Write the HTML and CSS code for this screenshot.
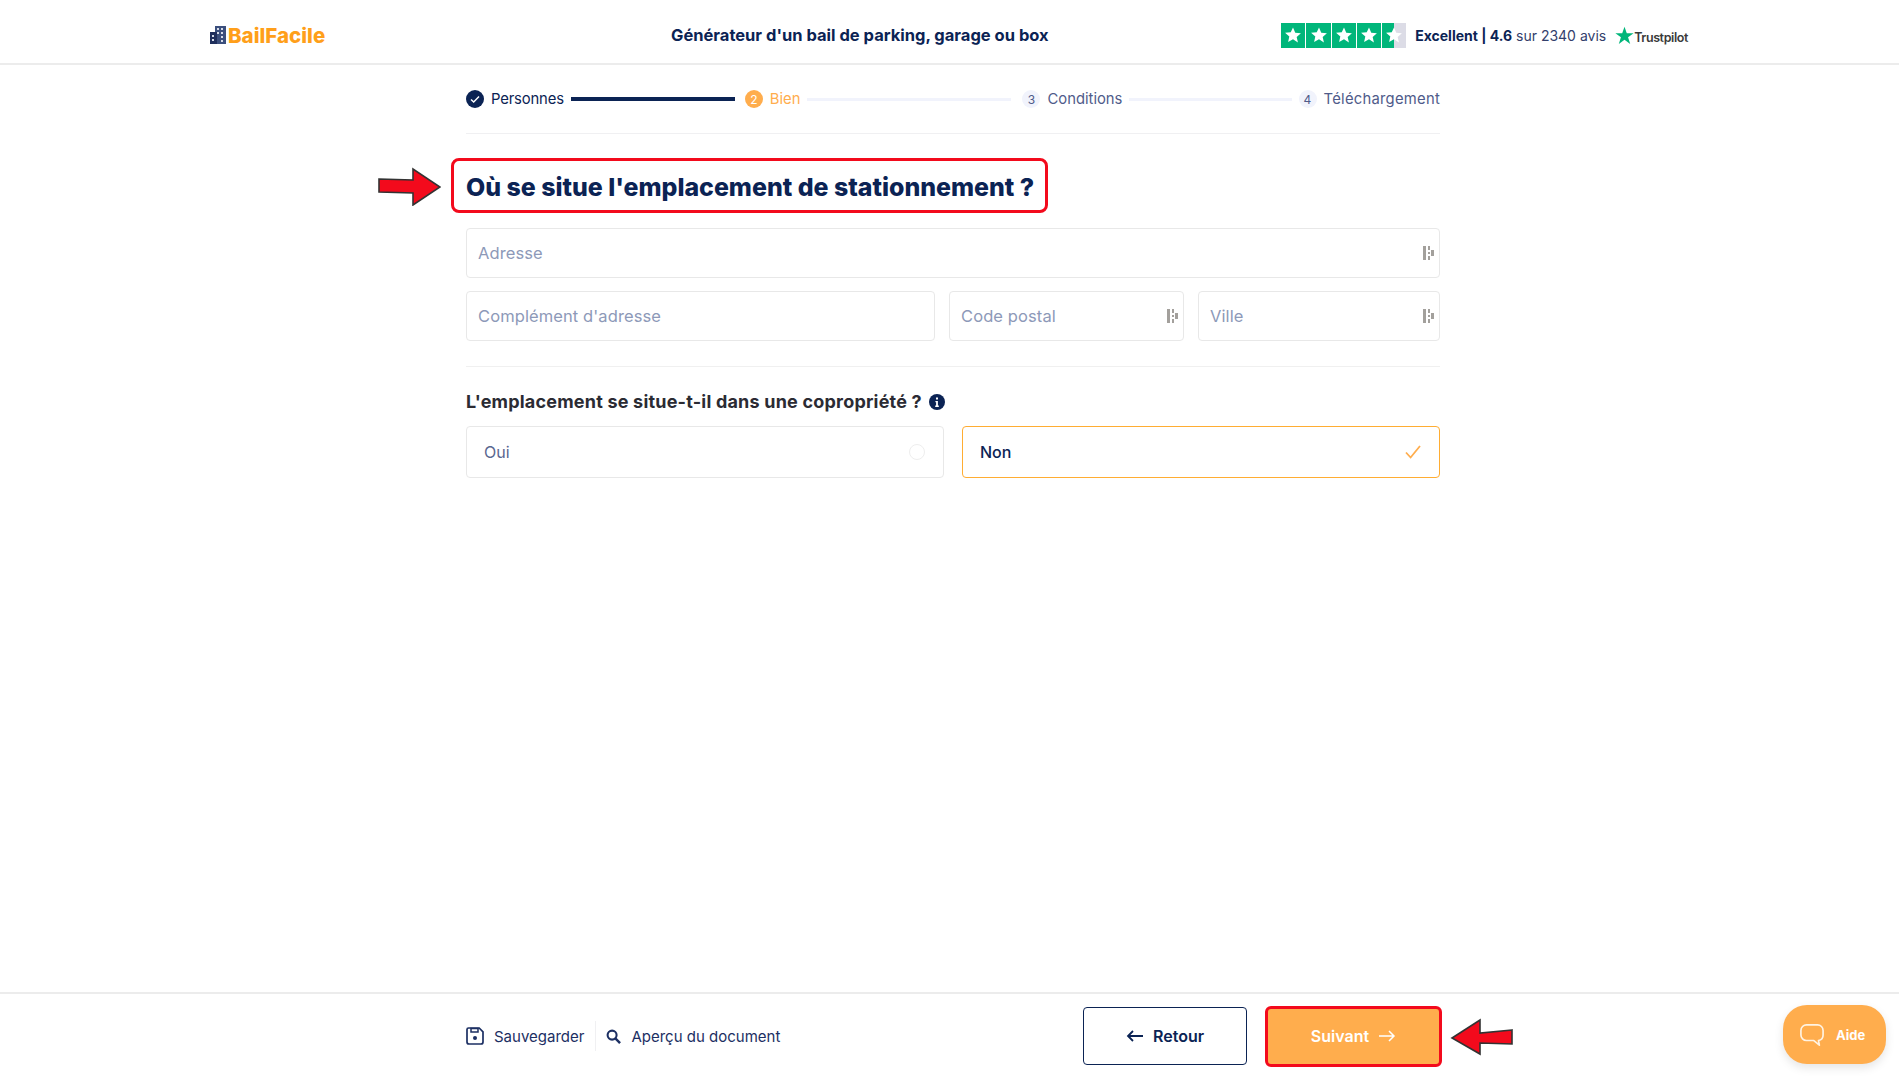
FILE: index.html
```html
<!DOCTYPE html>
<html lang="fr">
<head>
  <meta charset="UTF-8">
  <meta name="viewport" content="width=device-width, initial-scale=1.0">
  <title>BailFacile</title>
  <link rel="stylesheet" href="styles.css">
</head>
<body>
  <header class="topbar">
    <a class="logo">
      <svg class="logo-icon" viewBox="0 0 16 18">
        <rect x="5" y="0" width="11" height="18" fill="#3b4f7d"/>
        <rect x="0" y="6" width="7" height="12" fill="#1f2f5c"/>
        <path d="M7 2h2v2H7zM11 2h2v2h-2zM7 6h2v2H7zM11 6h2v2h-2zM11 10h2v2h-2zM11 14h2v2h-2zM2 9h2v2H2zM2 13h2v2H2z" fill="#d5dbe8"/>
      </svg>
      <span>BailFacile</span>
    </a>
    <div class="topbar-title">Générateur d'un bail de parking, garage ou box</div>
    <div class="trust">
      <div class="trust-stars">
        <span class="star-box"><svg viewBox="0 0 24 24"><path d="M12 3l2.7 6.2 6.8.6-5.1 4.5 1.5 6.7L12 17l-5.9 3.5 1.5-6.7-5.1-4.5 6.8-.6z"/></svg></span>
        <span class="star-box"><svg viewBox="0 0 24 24"><path d="M12 3l2.7 6.2 6.8.6-5.1 4.5 1.5 6.7L12 17l-5.9 3.5 1.5-6.7-5.1-4.5 6.8-.6z"/></svg></span>
        <span class="star-box"><svg viewBox="0 0 24 24"><path d="M12 3l2.7 6.2 6.8.6-5.1 4.5 1.5 6.7L12 17l-5.9 3.5 1.5-6.7-5.1-4.5 6.8-.6z"/></svg></span>
        <span class="star-box"><svg viewBox="0 0 24 24"><path d="M12 3l2.7 6.2 6.8.6-5.1 4.5 1.5 6.7L12 17l-5.9 3.5 1.5-6.7-5.1-4.5 6.8-.6z"/></svg></span>
        <span class="star-box star-half"><svg viewBox="0 0 24 24"><path d="M12 3l2.7 6.2 6.8.6-5.1 4.5 1.5 6.7L12 17l-5.9 3.5 1.5-6.7-5.1-4.5 6.8-.6z"/></svg></span>
      </div>
      <div class="trust-text"><b>Excellent | 4.6</b> sur 2340 avis</div>
      <div class="trustpilot">
        <svg viewBox="0 0 24 24" width="19" height="19"><path fill="#00b67a" d="M12 1l2.9 8.2h8.6l-7 5.1 2.7 8.4-7.2-5.2-7.2 5.2 2.7-8.4-7-5.1h8.6z"/></svg>
        <span>Trustpilot</span>
      </div>
    </div>
  </header>

  <main class="content">
    <nav class="steps">
      <span class="step step-done">
        <svg class="step-icon" viewBox="0 0 18 18"><circle cx="9" cy="9" r="9" fill="#0b2354"/><path d="M5 9.4l2.7 2.7L13 6.4" fill="none" stroke="#fff" stroke-width="1.4"/></svg>
        Personnes
      </span>
      <span class="step-line step-line-done"></span>
      <span class="step step-current"><span class="step-num">2</span>Bien</span>
      <span class="step-line step-line-mid"></span>
      <span class="step step-third"><span class="step-num">3</span>Conditions</span>
      <span class="step-line step-line-last"></span>
      <span class="step step-last"><span class="step-num">4</span>Téléchargement</span>
    </nav>

    <div class="heading-row">
      <svg class="mark mark-title" viewBox="0 0 63 39"><path d="M1 12l34 1V2l27 18-27 18V26L1 25z" fill="#f30a1c" stroke="#333" stroke-width="1.6"/></svg>
      <h1 class="heading">Où se situe l'emplacement de stationnement ?</h1>
    </div>

    <div class="field-row">
      <div class="field field-full">
        <span class="placeholder">Adresse</span>
        <svg class="field-icon" viewBox="0 0 11 14"><path d="M0 0h3v14H0zM5 0h2v4H5zM5 6h2v2H5zM5 10h2v4H5zM8 4h3v6H8z" fill="#a3a09c"/></svg>
      </div>
    </div>
    <div class="field-row">
      <div class="field field-wide"><span class="placeholder">Complément d'adresse</span></div>
      <div class="field field-postal">
        <span class="placeholder">Code postal</span>
        <svg class="field-icon" viewBox="0 0 11 14"><path d="M0 0h3v14H0zM5 0h2v4H5zM5 6h2v2H5zM5 10h2v4H5zM8 4h3v6H8z" fill="#a3a09c"/></svg>
      </div>
      <div class="field field-city">
        <span class="placeholder">Ville</span>
        <svg class="field-icon" viewBox="0 0 11 14"><path d="M0 0h3v14H0zM5 0h2v4H5zM5 6h2v2H5zM5 10h2v4H5zM8 4h3v6H8z" fill="#a3a09c"/></svg>
      </div>
    </div>

    <hr class="divider">

    <div class="question">
      L'emplacement se situe-t-il dans une copropriété ?
      <svg viewBox="0 0 16 16" width="16" height="16"><circle cx="8" cy="8" r="8" fill="#0b2354"/><path d="M7 3.4h2v2H7zM6.4 7h2.5v4.6h.9V13H6.2v-1.4h.9V8.3h-.7z" fill="#fff"/></svg>
    </div>

    <div class="choices">
      <div class="choice">
        Oui
        <span class="choice-radio"></span>
      </div>
      <div class="choice choice-on">
        Non
        <svg viewBox="0 0 16 14" width="16" height="14"><path d="M1 7.5l4.6 5L15 1" fill="none" stroke="#ffad4d" stroke-width="1.8"/></svg>
      </div>
    </div>
  </main>

  <footer class="bottombar">
    <div class="links">
      <a class="link">
        <svg viewBox="0 0 18 18" width="18" height="18"><path d="M2.5 1h10.7L17 4.8V15a2 2 0 0 1-2 2H3a2 2 0 0 1-2-2V2.500A1.500 1.500 0 0 1 2.500 1z" fill="none" stroke="#1c2f63" stroke-width="1.700"/><path d="M5 1.500h7v3.500H5z" fill="none" stroke="#1c2f63" stroke-width="1.500"/><circle cx="9" cy="11" r="2" fill="#1c2f63"/></svg>
        Sauvegarder
      </a>
      <a class="link link-sep">
        <svg viewBox="0 0 16 16" width="15" height="15"><circle cx="6.500" cy="6.500" r="4.800" fill="none" stroke="#1c2f63" stroke-width="2.200"/><path d="M10 10l5 5" stroke="#1c2f63" stroke-width="2.600"/></svg>
        Aperçu du document
      </a>
    </div>
    <div class="actions">
      <button class="btn btn-back">
        <svg viewBox="0 0 18 12" width="18" height="12"><path d="M17 6H2M7 1L2 6l5 5" fill="none" stroke="#0b2354" stroke-width="1.800"/></svg>
        Retour
      </button>
      <div class="next-wrap">
        <button class="btn btn-next">
          Suivant
          <svg viewBox="0 0 18 12" width="18" height="12"><path d="M1 6h15M11 1l5 5-5 5" fill="none" stroke="#fff" stroke-width="1.500"/></svg>
        </button>
        <svg class="mark mark-next" viewBox="0 0 63 39"><path d="M62 13l-32 3V3L2 21l28 16V26l32 1z" fill="#f30a1c" stroke="#333" stroke-width="1.600"/></svg>
      </div>
    </div>
  </footer>

  <button class="help">
    <svg viewBox="0 0 28 26" width="26" height="24"><path d="M8 2h12a6 6 0 0 1 6 6v5a6 6 0 0 1-5 6l1 5-6-5H8a6 6 0 0 1-6-6V8a6 6 0 0 1 6-6z" fill="none" stroke="#fff3e3" stroke-width="1.800" stroke-linejoin="round"/></svg>
    Aide
  </button>
</body>
</html>
```

FILE: styles.css
```css
* {
  box-sizing: border-box;
}
body {
  margin: 0;
  height: 100vh;
  display: flex;
  flex-direction: column;
  font-family: Inter, "Noto Sans", sans-serif;
  color: #0b2354;
  background: #fff;
  overflow: hidden;
}

/* top bar */
.topbar {
  height: 65px;
  flex: none;
  display: flex;
  align-items: center;
  padding: 7px 211px 0 210px;
  border-bottom: 2px solid #ececec;
}
.logo {
  display: flex;
  align-items: center;
  gap: 2px;
  width: 116px;
  font-size: 20.500px;
  font-weight: 800;
  color: #ff9f1a;
}
.logo-icon {
  flex: none;
  width: 16px;
  height: 18px;
}
.topbar-title {
  margin-left: 345px;
  font-size: 16.500px;
  font-weight: 700;
  white-space: nowrap;
}
.trust {
  margin-left: auto;
  display: flex;
  align-items: center;
}
.trust-stars {
  display: flex;
  gap: 1px;
}
.star-box {
  width: 24.200px;
  height: 25px;
  background: #00b67a;
  display: flex;
  align-items: center;
  justify-content: center;
}
.star-box svg {
  width: 20px;
  height: 20px;
  fill: #fff;
}
.star-half {
  background: linear-gradient(90deg, #00b67a 50%, #dcdce6 50%);
}
.trust-text {
  margin-left: 9px;
  font-size: 14px;
  color: #33406b;
}
.trust-text b {
  color: #0b2354;
}
.trustpilot {
  margin-left: 9px;
  display: flex;
  align-items: center;
  font-size: 12.500px;
  font-weight: 600;
  letter-spacing: -0.4px;
  color: #3a3a3a;
}
.trustpilot span {
  margin-top: 4px;
}

/* form */
.content {
  flex: 1;
  width: 974px;
  margin-left: 466px;
}
.steps {
  height: 69px;
  display: flex;
  align-items: center;
  gap: 7px;
  border-bottom: 1px solid #f0f0f2;
  font-size: 14.800px;
  color: #4f5b8a;
}
.step {
  display: flex;
  align-items: center;
  gap: 7px;
  white-space: nowrap;
}
.step-icon {
  width: 18px;
  height: 18px;
}
.step-done {
  letter-spacing: -0.15px;
  color: #0b2354;
}
.step-num {
  width: 18px;
  height: 18px;
  border-radius: 50%;
  background: #f1f3fc;
  display: flex;
  align-items: center;
  justify-content: center;
  font-size: 12px;
}
.step-current {
  margin-left: 3px;
  color: #ffad4d;
}
.step-current .step-num {
  background: #ffad4d;
  color: #fff;
}
.step-third {
  margin-left: 4px;
}
.step-last {
  letter-spacing: 0.25px;
}
.step-line {
  height: 3px;
  background: #f1f3fc;
}
.step-line-done {
  width: 164px;
  height: 4px;
  background: #0b2354;
}
.step-line-mid {
  width: 204px;
}
.step-line-last {
  flex: 1;
}
.heading-row {
  position: relative;
  margin-top: 24px;
}
.heading {
  display: inline-block;
  margin: 0 0 0 -15px;
  height: 55px;
  width: 597px;
  padding-left: 12px;
  border: 3px solid #f30a1c;
  border-radius: 8px;
  font-size: 24.900px;
  line-height: 53px;
  font-weight: 800;
  white-space: nowrap;
}
.mark {
  position: absolute;
  width: 63px;
  height: 39px;
}
.mark-title {
  left: -88px;
  top: 9px;
}
.field-row {
  display: flex;
  gap: 14px;
  margin-top: 13px;
}
.heading-row + .field-row {
  margin-top: 15px;
}
.field {
  height: 50px;
  display: flex;
  align-items: center;
  justify-content: space-between;
  padding: 0 5px 0 11px;
  border: 1px solid #e8e8e8;
  border-radius: 4px;
}
.field-full {
  flex: 1;
}
.field-wide {
  width: 469px;
}
.field-postal {
  width: 235px;
}
.field-city {
  flex: 1;
}
.placeholder {
  font-size: 16.500px;
  letter-spacing: 0.1px;
  color: #8d99b8;
}
.field-icon {
  width: 11px;
  height: 14px;
}
.divider {
  margin: 25px 0 0;
  border: 0;
  border-top: 1px solid #f0f0f0;
}
.question {
  margin-top: 24px;
  display: flex;
  align-items: center;
  gap: 7px;
  font-size: 18px;
  letter-spacing: 0.2px;
  line-height: 21px;
  font-weight: 700;
  color: #2b2b33;
}
.choices {
  display: flex;
  gap: 18px;
  margin-top: 14px;
}
.choice {
  flex: 1;
  height: 52px;
  display: flex;
  align-items: center;
  justify-content: space-between;
  padding: 0 18px 0 17px;
  border: 1px solid #e8e8e8;
  border-radius: 4px;
  font-size: 16px;
  color: #5a6690;
}
.choice-radio {
  width: 16px;
  height: 16px;
  border: 1px solid #eeeeee;
  border-radius: 50%;
}
.choice-on {
  border-color: #ffad33;
  color: #0b2354;
  font-weight: 500;
}

/* bottom bar */
.bottombar {
  height: 88px;
  flex: none;
  display: flex;
  align-items: center;
  padding: 0 0 2px 466px;
  border-top: 2px solid #ececec;
}
.links {
  display: flex;
  align-items: center;
  width: 617px;
  font-size: 15px;
  color: #1c2f63;
}
.link {
  display: flex;
  align-items: center;
  gap: 10px;
}
.link-sep {
  margin-left: 11px;
  padding-left: 10px;
  border-left: 1px solid #f0f0f2;
  height: 30px;
}
.actions {
  display: flex;
  align-items: center;
  gap: 18px;
}
.btn {
  display: flex;
  align-items: center;
  justify-content: center;
  gap: 9px;
  font: inherit;
  font-size: 16px;
  font-weight: 600;
  border-radius: 4px;
  padding: 0;
}
.btn-back {
  width: 164px;
  height: 58px;
  background: #fff;
  color: #0b2354;
  border: 1px solid #0b2354;
}
.next-wrap {
  position: relative;
}
.btn-next {
  width: 177px;
  height: 61px;
  background: #ffad4d;
  color: #fff;
  border: 3px solid #f30a1c;
  border-radius: 6px;
}
.mark-next {
  left: 185px;
  top: 11px;
}
.help {
  position: absolute;
  left: 1783px;
  top: 1005px;
  width: 103px;
  height: 59px;
  display: flex;
  align-items: center;
  gap: 11px;
  padding: 0 0 0 16px;
  border: 0;
  border-radius: 24px;
  background: #ffad4d;
  box-shadow: 0 4px 10px rgba(0, 0, 0, 0.1);
  font: inherit;
  font-size: 13px;
  font-weight: 700;
  color: #fff;
}
```
